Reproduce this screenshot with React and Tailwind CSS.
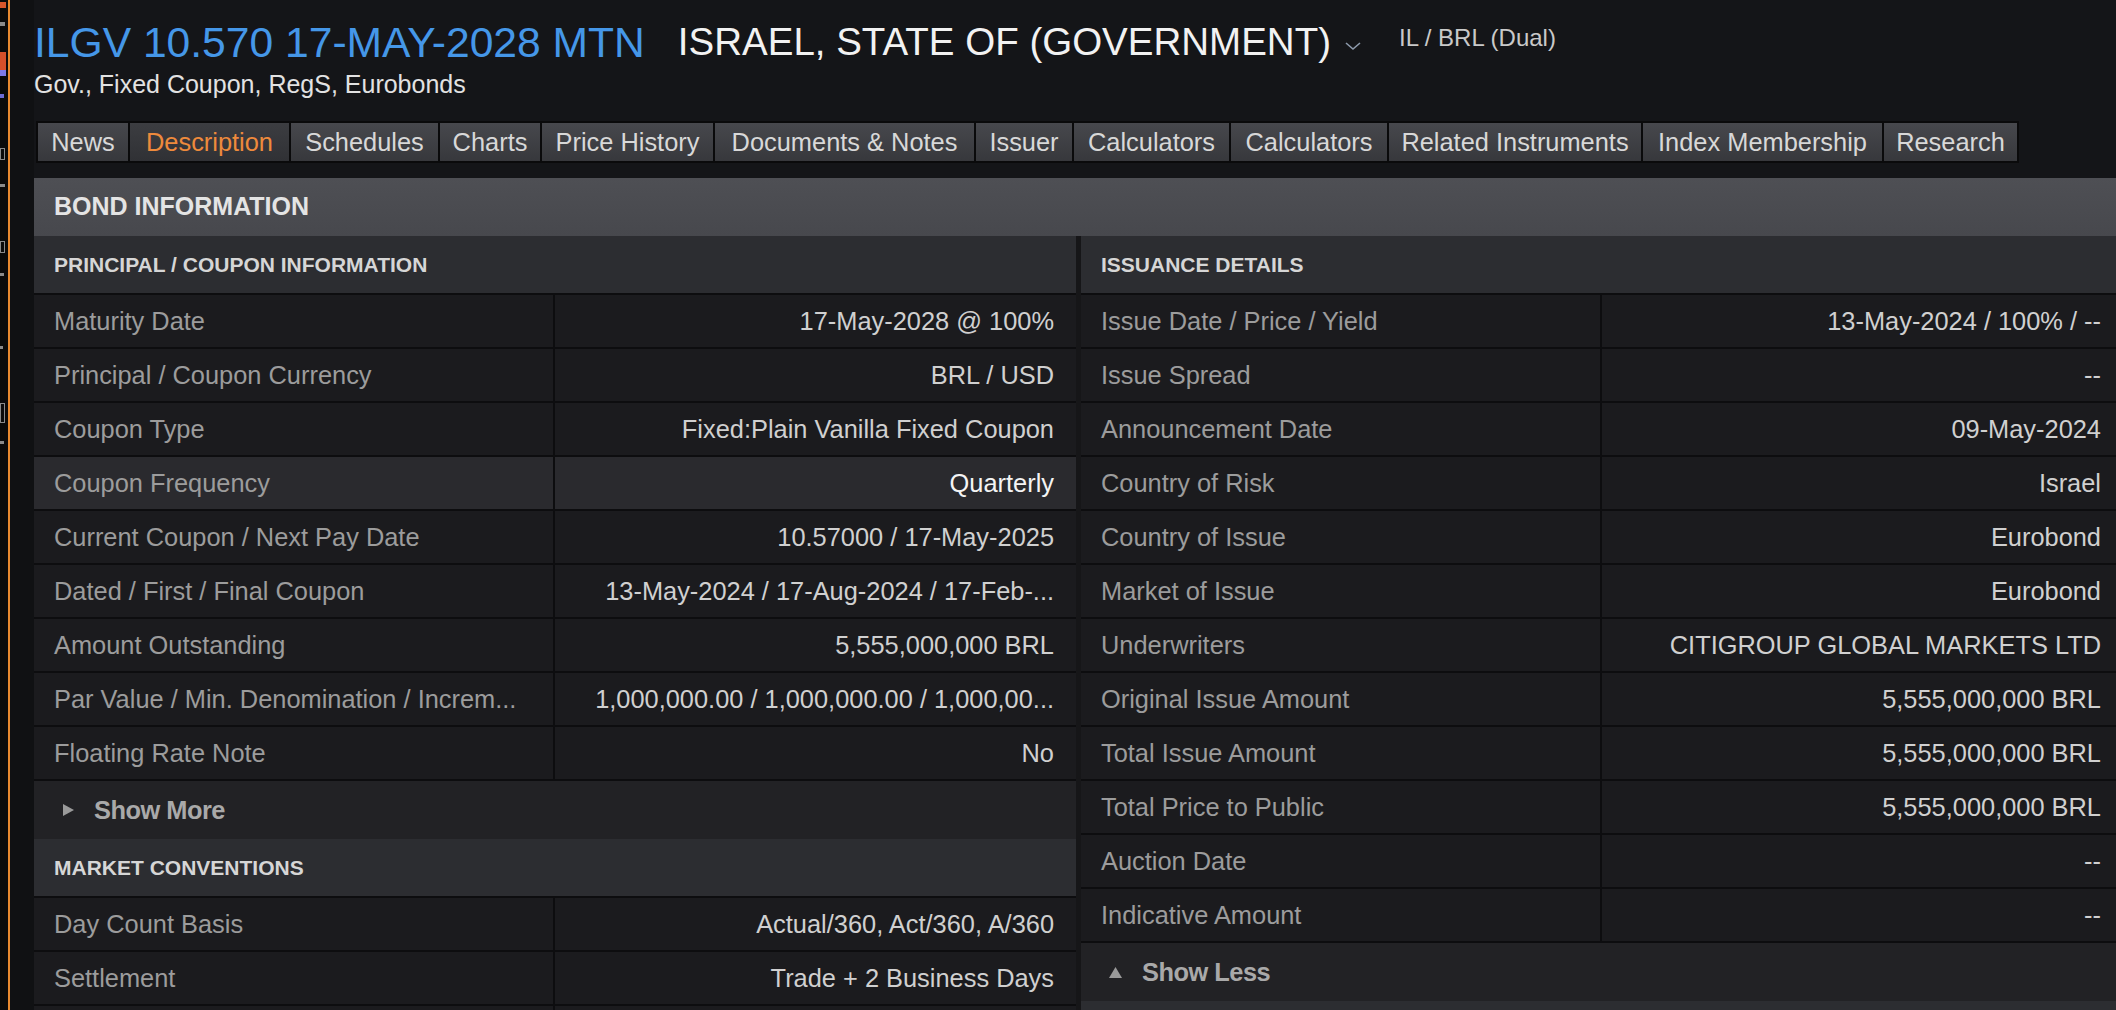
import React from 'react';

// widths measured off the reference so the strip lines up
const tabs = [
    ['News', 90], ['Description', 159], ['Schedules', 147], ['Charts', 100],
    ['Price History', 171], ['Documents & Notes', 259], ['Issuer', 96], ['Calculators', 155],
    ['Calculators', 156], ['Related Instruments', 252], ['Index Membership', 239], ['Research', 133],
];

const principalRows = [
    ['Maturity Date', '17-May-2028 @ 100%'],
    ['Principal / Coupon Currency', 'BRL / USD'],
    ['Coupon Type', 'Fixed:Plain Vanilla Fixed Coupon'],
    ['Coupon Frequency', 'Quarterly', true],
    ['Current Coupon / Next Pay Date', '10.57000 / 17-May-2025'],
    ['Dated / First / Final Coupon', '13-May-2024 / 17-Aug-2024 / 17-Feb-...'],
    ['Amount Outstanding', '5,555,000,000 BRL'],
    ['Par Value / Min. Denomination / Increm...', '1,000,000.00 / 1,000,000.00 / 1,000,00...'],
    ['Floating Rate Note', 'No'],
];

const marketRows = [
    ['Day Count Basis', 'Actual/360, Act/360, A/360'],
    ['Settlement', 'Trade + 2 Business Days'],
    ['', ''],
];

const issuanceRows = [
    ['Issue Date / Price / Yield', '13-May-2024 / 100% / --'],
    ['Issue Spread', '--'],
    ['Announcement Date', '09-May-2024'],
    ['Country of Risk', 'Israel'],
    ['Country of Issue', 'Eurobond'],
    ['Market of Issue', 'Eurobond'],
    ['Underwriters', 'CITIGROUP GLOBAL MARKETS LTD'],
    ['Original Issue Amount', '5,555,000,000 BRL'],
    ['Total Issue Amount', '5,555,000,000 BRL'],
    ['Total Price to Public', '5,555,000,000 BRL'],
    ['Auction Date', '--'],
    ['Indicative Amount', '--'],
];

const Row = ({ label, value, hi }) => (
    <div className={`grid grid-cols-2 h-[54px] shrink-0 border-b-2 border-[#0d0d0f] ${hi ? 'bg-[#2a2a2e]' : 'bg-[#1b1b1e]'}`}>
        <div className="flex items-center pl-[20px] pr-3 border-r-2 border-[#0d0d0f] text-[#9c9c9c] whitespace-nowrap overflow-hidden">
            {label}
        </div>
        <div className={`flex items-center justify-end pr-[22px] pl-3 whitespace-nowrap overflow-hidden ${hi ? 'text-[#f4f4f4]' : 'text-[#d0d0d0]'}`}>
            {value}
        </div>
    </div>
);

const SubHeader = ({ children }) => (
    <div className="h-[59px] shrink-0 flex items-center pl-[20px] bg-[#2c2d31] border-b-2 border-[#0d0d0f] text-[21px] font-bold text-[#d6d6d6]">
        {children}
    </div>
);

const Toggle = ({ up, children }) => (
    <div className={`h-[58px] shrink-0 flex items-center gap-[20px] bg-[#222225] text-[#a9a9a9] font-bold ${up ? 'pl-[28px]' : 'pl-[29px]'}`}>
        {up ? (
            <svg width="13" height="11" viewBox="0 0 13 11"><polygon points="6.5,0 13,11 0,11" fill="#9a9a9a" /></svg>
        ) : (
            <svg width="11" height="12" viewBox="0 0 11 12"><polygon points="0,0 11,6 0,12" fill="#9a9a9a" /></svg>
        )}
        <span className="tracking-[-0.5px]">{children}</span>
    </div>
);

export default function App() {
    return (
        <div className="w-[2116px] h-[1010px] overflow-hidden flex bg-[#141518] font-['Liberation_Sans',Arial,sans-serif] text-[25.4px]">
            {/* sidebar sliver */}
            <div className="w-[10px] shrink-0 bg-[#0a0a0a] border-r-2 border-[#e8892f] flex flex-col gap-[14px] pt-[2px]">
                <div className="w-[6px] h-[6px] bg-[#d9562b]" />
                <div className="w-[5px] h-[4px] bg-[#8a8a8a]" />
                <div className="w-[6px] h-[18px] bg-[#d5502a] mt-[12px]" />
                <div className="w-[6px] h-[6px] bg-[#7c79e6] -mt-[14px]" />
                <div className="w-[4px] h-[4px] bg-[#6b6bd6] mt-[4px]" />
                <div className="w-[5px] h-[12px] border border-[#8a8a8a] mt-[36px]" />
                <div className="w-[5px] h-[3px] bg-[#8a8a8a] mt-[10px]" />
                <div className="w-[5px] h-[12px] border border-[#8a8a8a] mt-[40px]" />
                <div className="w-[4px] h-[3px] bg-[#8a8a8a] mt-[6px]" />
                <div className="w-[3px] h-[3px] bg-[#8a8a8a] mt-[56px]" />
                <div className="w-[5px] h-[20px] border border-[#8a8a8a] mt-[40px]" />
                <div className="w-[4px] h-[3px] bg-[#8a8a8a] mt-[4px]" />
            </div>
            <div className="w-[24px] shrink-0 bg-[#101113]" />

            <main className="flex flex-col w-[2123px] shrink-0">
                {/* header */}
                <div className="flex items-start pt-[18px] h-[66px]">
                    <h1 className="text-[42.6px] leading-[48px] text-[#4597e8] whitespace-nowrap">ILGV 10.570 17-MAY-2028 MTN</h1>
                    <div className="ml-[33px] flex items-center whitespace-nowrap">
                        <span className="text-[38.5px] leading-[48px] text-[#f2f2f2]">ISRAEL, STATE OF (GOVERNMENT)</span>
                        <svg width="16" height="10" viewBox="0 0 16 10" className="ml-[14px] mt-[8px]">
                            <polyline points="1,2 8,8 15,2" fill="none" stroke="#8d9aab" strokeWidth="1.6" />
                        </svg>
                    </div>
                    <span className="ml-[38px] mt-[6px] text-[24px] leading-[28px] text-[#c9c9c9] whitespace-nowrap">IL / BRL (Dual)</span>
                </div>
                <div className="mt-[3px] text-[25px] leading-[30px] text-[#e2e2e2]">Gov., Fixed Coupon, RegS, Eurobonds</div>

                {/* tabs */}
                <div className="mt-[22px] ml-[2px] flex w-fit h-[47px] border-2 border-[#0a0a0b] bg-[#0a0a0b] gap-[2px]">
                    {tabs.map(([t, w], i) => (
                        <div
                            key={i}
                            style={{ width: w }}
                            className={`flex items-center justify-center whitespace-nowrap bg-linear-to-b ${i === 1 ? 'from-[#3c3d41] to-[#303135] text-[#ee8a3c]' : 'from-[#47484d] to-[#37383c] text-[#d8d8d8]'}`}
                        >
                            {t}
                        </div>
                    ))}
                </div>

                {/* bond information panel */}
                <section className="mt-[15px] flex flex-col">
                    <div className="h-[58px] flex items-center pl-[20px] bg-linear-to-b from-[#4e4f54] to-[#47484d] text-[25px] font-bold text-[#e4e4e4]">
                        BOND INFORMATION
                    </div>
                    <div className="grid grid-cols-[1042px_1042px] gap-[5px] bg-[#161618]">
                        <div className="flex flex-col">
                            <SubHeader>PRINCIPAL / COUPON INFORMATION</SubHeader>
                            {principalRows.map(([l, v, hi], i) => (
                                <Row key={i} label={l} value={v} hi={hi} />
                            ))}
                            <Toggle>Show More</Toggle>
                            <SubHeader>MARKET CONVENTIONS</SubHeader>
                            {marketRows.map(([l, v], i) => (
                                <Row key={i} label={l} value={v} />
                            ))}
                        </div>
                        <div className="flex flex-col">
                            <SubHeader>ISSUANCE DETAILS</SubHeader>
                            {issuanceRows.map(([l, v], i) => (
                                <Row key={i} label={l} value={v} />
                            ))}
                            <Toggle up>Show Less</Toggle>
                            <div className="h-[58px] bg-[#2c2d31]" />
                        </div>
                    </div>
                </section>
            </main>
        </div>
    );
}
